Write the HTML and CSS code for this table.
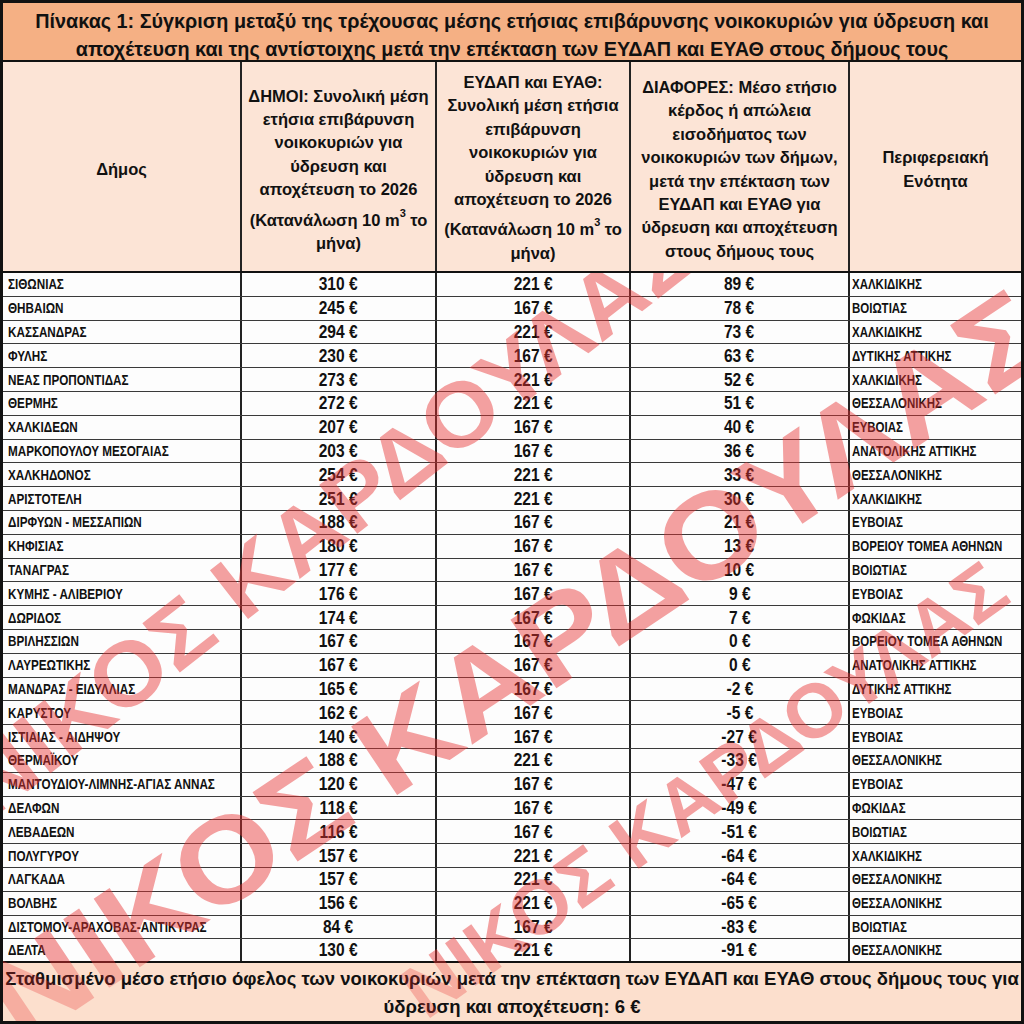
FILE: index.html
```html
<!DOCTYPE html>
<html lang="el">
<head>
<meta charset="utf-8">
<title>Πίνακας 1</title>
<link rel="stylesheet" href="styles.css">
</head>
<body>
<div class="sheet">
  <div class="title">Πίνακας 1: Σύγκριση μεταξύ της τρέχουσας μέσης ετήσιας επιβάρυνσης νοικοκυριών για ύδρευση και<br>αποχέτευση και της αντίστοιχης μετά την επέκταση των ΕΥΔΑΠ και ΕΥΑΘ στους δήμους τους</div>
  <div class="head">
    <div class="hc hc-dimos">Δήμος</div>
    <div class="hc hc-two"><div>ΔΗΜΟΙ: Συνολική μέση<br>ετήσια επιβάρυνση<br>νοικοκυριών για<br>ύδρευση και<br>αποχέτευση το 2026</div><div class="cons">(Κατανάλωση 10 m<sup>3</sup> το<br>μήνα)</div></div>
    <div class="hc hc-three"><div>ΕΥΔΑΠ και ΕΥΑΘ:<br>Συνολική μέση ετήσια<br>επιβάρυνση<br>νοικοκυριών για<br>ύδρευση και<br>αποχέτευση το 2026</div><div class="cons">(Κατανάλωση 10 m<sup>3</sup> το<br>μήνα)</div></div>
    <div class="hc hc-four">ΔΙΑΦΟΡΕΣ: Μέσο ετήσιο<br>κέρδος ή απώλεια<br>εισοδήματος των<br>νοικοκυριών των δήμων,<br>μετά την επέκταση των<br>ΕΥΔΑΠ και ΕΥΑΘ για<br>ύδρευση και αποχέτευση<br>στους δήμους τους</div>
    <div class="hc hc-region">Περιφερειακή<br>Ενότητα</div>
  </div>
  <div class="rows">
    <div class="row"><div class="name"><span>ΣΙΘΩΝΙΑΣ</span></div><div class="num"><span>310 €</span></div><div class="num"><span>221 €</span></div><div class="num"><span>89 €</span></div><div class="reg"><span>ΧΑΛΚΙΔΙΚΗΣ</span></div></div>
    <div class="row"><div class="name"><span>ΘΗΒΑΙΩΝ</span></div><div class="num"><span>245 €</span></div><div class="num"><span>167 €</span></div><div class="num"><span>78 €</span></div><div class="reg"><span>ΒΟΙΩΤΙΑΣ</span></div></div>
    <div class="row"><div class="name"><span>ΚΑΣΣΑΝΔΡΑΣ</span></div><div class="num"><span>294 €</span></div><div class="num"><span>221 €</span></div><div class="num"><span>73 €</span></div><div class="reg"><span>ΧΑΛΚΙΔΙΚΗΣ</span></div></div>
    <div class="row"><div class="name"><span>ΦΥΛΗΣ</span></div><div class="num"><span>230 €</span></div><div class="num"><span>167 €</span></div><div class="num"><span>63 €</span></div><div class="reg"><span>ΔΥΤΙΚΗΣ ΑΤΤΙΚΗΣ</span></div></div>
    <div class="row"><div class="name"><span>ΝΕΑΣ ΠΡΟΠΟΝΤΙΔΑΣ</span></div><div class="num"><span>273 €</span></div><div class="num"><span>221 €</span></div><div class="num"><span>52 €</span></div><div class="reg"><span>ΧΑΛΚΙΔΙΚΗΣ</span></div></div>
    <div class="row"><div class="name"><span>ΘΕΡΜΗΣ</span></div><div class="num"><span>272 €</span></div><div class="num"><span>221 €</span></div><div class="num"><span>51 €</span></div><div class="reg"><span>ΘΕΣΣΑΛΟΝΙΚΗΣ</span></div></div>
    <div class="row"><div class="name"><span>ΧΑΛΚΙΔΕΩΝ</span></div><div class="num"><span>207 €</span></div><div class="num"><span>167 €</span></div><div class="num"><span>40 €</span></div><div class="reg"><span>ΕΥΒΟΙΑΣ</span></div></div>
    <div class="row"><div class="name"><span>ΜΑΡΚΟΠΟΥΛΟΥ ΜΕΣΟΓΑΙΑΣ</span></div><div class="num"><span>203 €</span></div><div class="num"><span>167 €</span></div><div class="num"><span>36 €</span></div><div class="reg"><span>ΑΝΑΤΟΛΙΚΗΣ ΑΤΤΙΚΗΣ</span></div></div>
    <div class="row"><div class="name"><span>ΧΑΛΚΗΔΟΝΟΣ</span></div><div class="num"><span>254 €</span></div><div class="num"><span>221 €</span></div><div class="num"><span>33 €</span></div><div class="reg"><span>ΘΕΣΣΑΛΟΝΙΚΗΣ</span></div></div>
    <div class="row"><div class="name"><span>ΑΡΙΣΤΟΤΕΛΗ</span></div><div class="num"><span>251 €</span></div><div class="num"><span>221 €</span></div><div class="num"><span>30 €</span></div><div class="reg"><span>ΧΑΛΚΙΔΙΚΗΣ</span></div></div>
    <div class="row"><div class="name"><span>ΔΙΡΦΥΩΝ - ΜΕΣΣΑΠΙΩΝ</span></div><div class="num"><span>188 €</span></div><div class="num"><span>167 €</span></div><div class="num"><span>21 €</span></div><div class="reg"><span>ΕΥΒΟΙΑΣ</span></div></div>
    <div class="row"><div class="name"><span>ΚΗΦΙΣΙΑΣ</span></div><div class="num"><span>180 €</span></div><div class="num"><span>167 €</span></div><div class="num"><span>13 €</span></div><div class="reg"><span>ΒΟΡΕΙΟΥ ΤΟΜΕΑ ΑΘΗΝΩΝ</span></div></div>
    <div class="row"><div class="name"><span>ΤΑΝΑΓΡΑΣ</span></div><div class="num"><span>177 €</span></div><div class="num"><span>167 €</span></div><div class="num"><span>10 €</span></div><div class="reg"><span>ΒΟΙΩΤΙΑΣ</span></div></div>
    <div class="row"><div class="name"><span>ΚΥΜΗΣ - ΑΛΙΒΕΡΙΟΥ</span></div><div class="num"><span>176 €</span></div><div class="num"><span>167 €</span></div><div class="num"><span>9 €</span></div><div class="reg"><span>ΕΥΒΟΙΑΣ</span></div></div>
    <div class="row"><div class="name"><span>ΔΩΡΙΔΟΣ</span></div><div class="num"><span>174 €</span></div><div class="num"><span>167 €</span></div><div class="num"><span>7 €</span></div><div class="reg"><span>ΦΩΚΙΔΑΣ</span></div></div>
    <div class="row"><div class="name"><span>ΒΡΙΛΗΣΣΙΩΝ</span></div><div class="num"><span>167 €</span></div><div class="num"><span>167 €</span></div><div class="num"><span>0 €</span></div><div class="reg"><span>ΒΟΡΕΙΟΥ ΤΟΜΕΑ ΑΘΗΝΩΝ</span></div></div>
    <div class="row"><div class="name"><span>ΛΑΥΡΕΩΤΙΚΗΣ</span></div><div class="num"><span>167 €</span></div><div class="num"><span>167 €</span></div><div class="num"><span>0 €</span></div><div class="reg"><span>ΑΝΑΤΟΛΙΚΗΣ ΑΤΤΙΚΗΣ</span></div></div>
    <div class="row"><div class="name"><span>ΜΑΝΔΡΑΣ - ΕΙΔΥΛΛΙΑΣ</span></div><div class="num"><span>165 €</span></div><div class="num"><span>167 €</span></div><div class="num"><span>-2 €</span></div><div class="reg"><span>ΔΥΤΙΚΗΣ ΑΤΤΙΚΗΣ</span></div></div>
    <div class="row"><div class="name"><span>ΚΑΡΥΣΤΟΥ</span></div><div class="num"><span>162 €</span></div><div class="num"><span>167 €</span></div><div class="num"><span>-5 €</span></div><div class="reg"><span>ΕΥΒΟΙΑΣ</span></div></div>
    <div class="row"><div class="name"><span>ΙΣΤΙΑΙΑΣ - ΑΙΔΗΨΟΥ</span></div><div class="num"><span>140 €</span></div><div class="num"><span>167 €</span></div><div class="num"><span>-27 €</span></div><div class="reg"><span>ΕΥΒΟΙΑΣ</span></div></div>
    <div class="row"><div class="name"><span>ΘΕΡΜΑΪΚΟΥ</span></div><div class="num"><span>188 €</span></div><div class="num"><span>221 €</span></div><div class="num"><span>-33 €</span></div><div class="reg"><span>ΘΕΣΣΑΛΟΝΙΚΗΣ</span></div></div>
    <div class="row"><div class="name"><span>ΜΑΝΤΟΥΔΙΟΥ-ΛΙΜΝΗΣ-ΑΓΙΑΣ ΑΝΝΑΣ</span></div><div class="num"><span>120 €</span></div><div class="num"><span>167 €</span></div><div class="num"><span>-47 €</span></div><div class="reg"><span>ΕΥΒΟΙΑΣ</span></div></div>
    <div class="row"><div class="name"><span>ΔΕΛΦΩΝ</span></div><div class="num"><span>118 €</span></div><div class="num"><span>167 €</span></div><div class="num"><span>-49 €</span></div><div class="reg"><span>ΦΩΚΙΔΑΣ</span></div></div>
    <div class="row"><div class="name"><span>ΛΕΒΑΔΕΩΝ</span></div><div class="num"><span>116 €</span></div><div class="num"><span>167 €</span></div><div class="num"><span>-51 €</span></div><div class="reg"><span>ΒΟΙΩΤΙΑΣ</span></div></div>
    <div class="row"><div class="name"><span>ΠΟΛΥΓΥΡΟΥ</span></div><div class="num"><span>157 €</span></div><div class="num"><span>221 €</span></div><div class="num"><span>-64 €</span></div><div class="reg"><span>ΧΑΛΚΙΔΙΚΗΣ</span></div></div>
    <div class="row"><div class="name"><span>ΛΑΓΚΑΔΑ</span></div><div class="num"><span>157 €</span></div><div class="num"><span>221 €</span></div><div class="num"><span>-64 €</span></div><div class="reg"><span>ΘΕΣΣΑΛΟΝΙΚΗΣ</span></div></div>
    <div class="row"><div class="name"><span>ΒΟΛΒΗΣ</span></div><div class="num"><span>156 €</span></div><div class="num"><span>221 €</span></div><div class="num"><span>-65 €</span></div><div class="reg"><span>ΘΕΣΣΑΛΟΝΙΚΗΣ</span></div></div>
    <div class="row"><div class="name"><span>ΔΙΣΤΟΜΟΥ-ΑΡΑΧΟΒΑΣ-ΑΝΤΙΚΥΡΑΣ</span></div><div class="num"><span>84 €</span></div><div class="num"><span>167 €</span></div><div class="num"><span>-83 €</span></div><div class="reg"><span>ΒΟΙΩΤΙΑΣ</span></div></div>
    <div class="row row-last"><div class="name"><span>ΔΕΛΤΑ</span></div><div class="num"><span>130 €</span></div><div class="num"><span>221 €</span></div><div class="num"><span>-91 €</span></div><div class="reg"><span>ΘΕΣΣΑΛΟΝΙΚΗΣ</span></div></div>
  </div>
  <div class="foot">Σταθμισμένο μέσο ετήσιο όφελος των νοικοκυριών μετά την επέκταση των ΕΥΔΑΠ και ΕΥΑΘ στους δήμους τους για<br>ύδρευση και αποχέτευση: 6 €</div>

  <svg class="wm" width="1024" height="1024" viewBox="0 0 1024 1024" aria-hidden="true">
    <defs>
      <clipPath id="clip-body"><rect x="3" y="273" width="1018" height="690"/></clipPath>
      <clipPath id="clip-foot"><rect x="3" y="963" width="1018" height="58"/></clipPath>
      <g id="wm-lines">
        <text class="wm-t" font-size="90" textLength="900" lengthAdjust="spacingAndGlyphs" transform="translate(-9 820) rotate(-38)">ΝΙΚΟΣ ΚΑΡΔΟΥΛΑΣ</text>
        <text class="wm-t" font-size="120" textLength="1245" lengthAdjust="spacingAndGlyphs" transform="translate(22 1046) rotate(-33.8)">ΝΙΚΟΣ ΚΑΡΔΟΥΛΑΣ</text>
        <text class="wm-t" font-size="76" textLength="722" lengthAdjust="spacingAndGlyphs" transform="translate(426 1021) rotate(-35.6)">ΝΙΚΟΣ ΚΑΡΔΟΥΛΑΣ</text>
      </g>
    </defs>
    <g class="wm-body" clip-path="url(#clip-body)"><use href="#wm-lines"/></g>
    <g class="wm-foot" clip-path="url(#clip-foot)"><use href="#wm-lines"/></g>
  </svg>
</div>
</body>
</html>
```

FILE: styles.css
```css
html, body {
  margin: 0;
  padding: 0;
  background: #ffffff;
}

.sheet {
  position: relative;
  width: 1024px;
  height: 1024px;
  box-sizing: border-box;
  border: 3px solid #111;
  display: flex;
  flex-direction: column;
  font-family: "Liberation Sans", Arial, sans-serif;
  color: #111;
  overflow: hidden;
  background: #fff;
}

.title {
  height: 59px;
  flex: none;
  box-sizing: border-box;
  border-bottom: 2px solid #111;
  background: #f5b084;
  font-weight: bold;
  font-size: 19.8px;
  line-height: 28px;
  text-align: center;
  padding-top: 4px;
  white-space: nowrap;
}

.head {
  flex: none;
  display: grid;
  grid-template-columns: 239px 195px 194px 219px 171px;
  height: 211px;
  box-sizing: border-box;
  border-bottom: 2px solid #111;
  background: #fce4d6;
}

.hc {
  display: flex;
  flex-direction: column;
  justify-content: center;
  align-items: center;
  text-align: center;
  border-right: 2px solid #222;
  font-weight: bold;
  font-size: 16.5px;
  line-height: 23.4px;
  white-space: nowrap;
}

.hc:last-child {
  border-right: none;
}

.hc-dimos {
  padding-top: 7px;
}

.hc-region {
  padding-top: 6px;
}

.hc-two {
  padding-top: 7px;
}

.hc-three {
  padding-top: 3px;
}

.hc-four {
  padding-top: 6px;
}

.cons {
  margin-top: 7px;
}

sup {
  font-size: 11px;
  vertical-align: 9px;
  line-height: 0;
}

.rows {
  flex: none;
}

.row {
  display: grid;
  grid-template-columns: 239px 195px 194px 219px 171px;
  height: 23.8px;
  box-sizing: border-box;
  border-bottom: 1.5px solid #3a3a3a;
  background: #fdfdfd;
}

.row-last {
  border-bottom: 2px solid #111;
}

.row > div {
  display: flex;
  align-items: center;
  border-right: 2px solid #222;
  white-space: nowrap;
  font-weight: bold;
  min-width: 0;
}

.row > div:last-child {
  border-right: none;
}

.row span {
  display: inline-block;
  transform-origin: left center;
}

.name {
  font-size: 14px;
  padding-left: 5px;
}

.name span {
  transform: scaleX(0.835);
}

.num {
  justify-content: center;
  font-size: 18.5px;
}

.num span {
  transform-origin: center center;
  transform: scaleX(0.84);
}

.reg {
  font-size: 14px;
  padding-left: 2px;
}

.reg span {
  transform: scaleX(0.82);
}

.foot {
  flex: 1;
  display: flex;
  align-items: center;
  justify-content: center;
  background: #fcdfcd;
  font-weight: bold;
  font-size: 18.5px;
  line-height: 28px;
  padding-top: 2px;
  text-align: center;
  white-space: nowrap;
}

.wm {
  position: absolute;
  left: -3px;
  top: -3px;
  pointer-events: none;
}

.wm-t {
  font-family: "Liberation Sans", Arial, sans-serif;
  font-weight: bold;
  fill: #e83030;
}

.wm-body {
  opacity: 0.45;
}

.wm-foot {
  opacity: 0.28;
}
```
